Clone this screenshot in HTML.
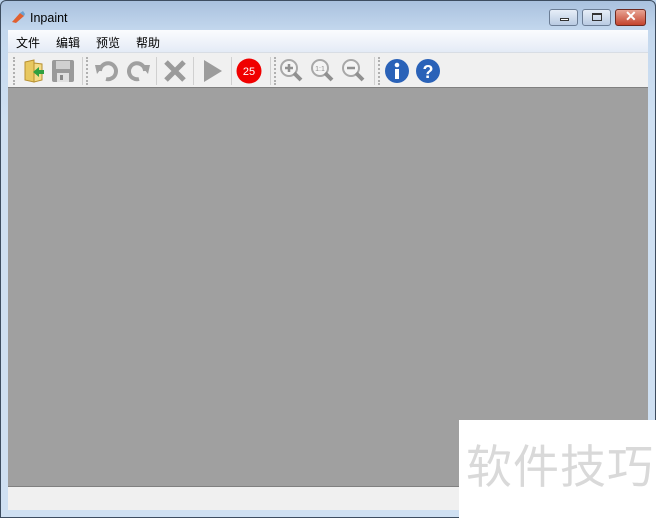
<!DOCTYPE html>
<html><head><meta charset="utf-8"><style>
*{margin:0;padding:0;box-sizing:border-box}
body{width:656px;height:518px;overflow:hidden;position:relative;font-family:"Liberation Sans","Noto Sans CJK SC",sans-serif;background:#bcd3ec}
.frame{position:absolute;left:0;top:0;width:656px;height:518px;background:linear-gradient(#a9c1de,#c4d8ee 30px,#cfe0f2 120px,#cfe0f2);border:1px solid #3d4d60;border-radius:6px 6px 0 0}
.title{position:absolute;left:30px;top:11px;font-size:12.5px;color:#000}
.menu{position:absolute;left:8px;top:30px;width:640px;height:22px;background:linear-gradient(#fbfcfe,#e4ebf6);font-size:12px}
.menu span{position:absolute;top:4px}
.tb{position:absolute;left:8px;top:52px;width:640px;height:35px;background:#f0f0f0;border-top:1px solid #d8dde4}
.canvas{position:absolute;left:8px;top:87px;width:640px;height:400px;background:#a0a0a0;border-top:1px solid #808080;border-bottom:1px solid #808080}
.status{position:absolute;left:8px;top:487px;width:640px;height:23px;background:#f0f0f0}
.wm{position:absolute;left:459px;top:420px;width:197px;height:98px;background:#fff}
.wm span{position:absolute;left:7px;top:21px;font-size:46px;color:#d9d9d9;font-family:"Noto Sans CJK SC",sans-serif;letter-spacing:1px;line-height:1;white-space:nowrap}
.btn{position:absolute;top:9px;width:29px;height:17px;border:1px solid #6b7d95;border-radius:3px;background:linear-gradient(#e6eef8,#b9cbe2)}
.grip{position:absolute;top:4px;width:2px;height:28px;border-left:2px dotted #b0b0b0}
.sep{position:absolute;top:4px;width:1px;height:28px;background:#d0d0d0}
svg{position:absolute}
</style></head><body>
<div class="frame"></div>
<svg style="left:10px;top:10px" width="16" height="14"><path d="M2 12 L10 3 L14 6 L6 13 Z" fill="#e06030"/><path d="M10 3 L13 1 L15 4 L14 6Z" fill="#6aa0d0"/></svg>
<div class="title">Inpaint</div>
<div class="btn" style="left:549px"><div style="position:absolute;left:10px;top:8px;width:9px;height:3px;border:1px solid #333;background:#fff"></div></div>
<div class="btn" style="left:582px"><div style="position:absolute;left:9px;top:3px;width:10px;height:8px;border:1px solid #333;border-top-width:2px"></div></div>
<div class="btn" style="left:615px;width:31px;background:linear-gradient(#e8a494,#c4442e);border-color:#6e2a20"><span style="position:absolute;left:9px;top:-2px;color:#fff;font-weight:bold;font-size:14px">✕</span></div>
<div class="menu"><span style="left:8px">文件</span><span style="left:48px">编辑</span><span style="left:88px">预览</span><span style="left:128px">帮助</span></div>
<div class="tb">
<div class="grip" style="left:5px"></div>
<svg style="left:14px;top:5px" width="24" height="26"><path d="M3 4 L12 2 L12 24 L3 22Z" fill="#e8c860" stroke="#b89030"/><path d="M12 5 L20 6 L20 22 L12 24Z" fill="#f3dc88" stroke="#b89030"/><path d="M11 14 L17 9 L17 12 L22 12 L22 16 L17 16 L17 19Z" fill="#30a040"/></svg>
<svg style="left:43px;top:6px" width="24" height="24"><rect x="1" y="1" width="22" height="22" rx="2" fill="#9a9a9a"/><rect x="5" y="2" width="14" height="8" fill="#d0d0d0"/><rect x="6" y="14" width="12" height="9" fill="#e0e0e0"/><rect x="9" y="16" width="3" height="5" fill="#888"/></svg>
<div class="sep" style="left:74px"></div><div class="grip" style="left:78px"></div>
<svg style="left:86px;top:6px" width="26" height="24"><path d="M6 12 A8 8 0 1 1 12 20" fill="none" stroke="#a0a0a0" stroke-width="4"/><path d="M1 6 L10 6 L3 15Z" fill="#a0a0a0"/></svg>
<svg style="left:117px;top:6px" width="26" height="24"><path d="M20 12 A8 8 0 1 0 14 20" fill="none" stroke="#a0a0a0" stroke-width="4"/><path d="M25 6 L16 6 L23 15Z" fill="#a0a0a0"/></svg>
<div class="sep" style="left:148px"></div>
<svg style="left:155px;top:6px" width="24" height="24"><path d="M3 3 L21 21 M21 3 L3 21" stroke="#9a9a9a" stroke-width="5"/></svg>
<div class="sep" style="left:185px"></div>
<svg style="left:193px;top:5px" width="24" height="26"><path d="M3 2 L21 13 L3 24Z" fill="#9c9c9c"/></svg>
<div class="sep" style="left:223px"></div>
<svg style="left:228px;top:5px" width="26" height="26"><circle cx="13" cy="13" r="12.5" fill="#f00000"/><text x="13" y="17" font-size="11" fill="#fff" text-anchor="middle" font-family="Liberation Sans">25</text></svg>
<div class="sep" style="left:262px"></div><div class="grip" style="left:266px"></div>
<svg style="left:271px;top:5px" width="26" height="26"><circle cx="10" cy="10" r="8" fill="#f4f4f4" stroke="#a8a8a8" stroke-width="2"/><path d="M15 15 L22 22" stroke="#909090" stroke-width="4"/><path d="M6 10 H14 M10 6 V14" stroke="#909090" stroke-width="2.5"/></svg>
<svg style="left:302px;top:5px" width="26" height="26"><circle cx="10" cy="10" r="8" fill="#f4f4f4" stroke="#a8a8a8" stroke-width="2"/><path d="M15 15 L22 22" stroke="#909090" stroke-width="4"/><text x="10" y="13" font-size="7" fill="#909090" text-anchor="middle" font-family="Liberation Sans">1:1</text></svg>
<svg style="left:333px;top:5px" width="26" height="26"><circle cx="10" cy="10" r="8" fill="#f4f4f4" stroke="#a8a8a8" stroke-width="2"/><path d="M15 15 L22 22" stroke="#909090" stroke-width="4"/><path d="M6 10 H14" stroke="#909090" stroke-width="2.5"/></svg>
<div class="sep" style="left:366px"></div><div class="grip" style="left:370px"></div>
<svg style="left:376px;top:5px" width="26" height="26"><circle cx="13" cy="13" r="12" fill="#2a62b8"/><circle cx="13" cy="7" r="2.3" fill="#fff"/><rect x="11" y="11" width="4" height="10" fill="#fff"/></svg>
<svg style="left:407px;top:5px" width="26" height="26"><circle cx="13" cy="13" r="12" fill="#2a62b8"/><text x="13" y="20" font-size="18" font-weight="bold" fill="#fff" text-anchor="middle" font-family="Liberation Sans">?</text></svg>
</div>
<div class="canvas"></div>
<div class="status"></div>
<div class="wm"><span>软件技巧</span></div>
</body></html>
